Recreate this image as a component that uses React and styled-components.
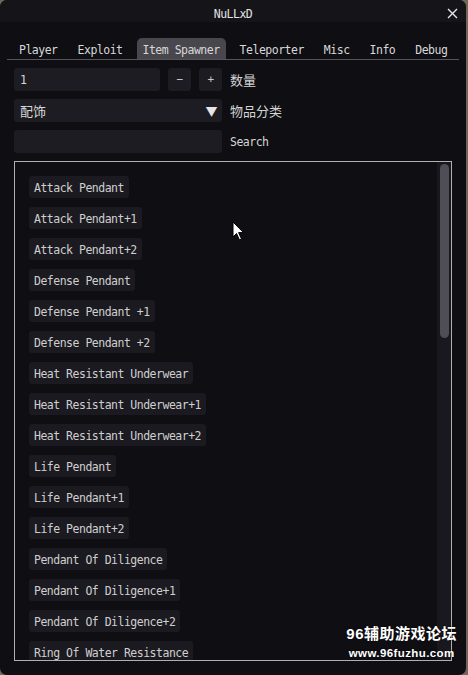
import React from 'react';
import styled, { createGlobalStyle } from 'styled-components';

const tabs = ['Player', 'Exploit', 'Item Spawner', 'Teleporter', 'Misc', 'Info', 'Debug'];

const items = [
  'Attack Pendant',
  'Attack Pendant+1',
  'Attack Pendant+2',
  'Defense Pendant',
  'Defense Pendant +1',
  'Defense Pendant +2',
  'Heat Resistant Underwear',
  'Heat Resistant Underwear+1',
  'Heat Resistant Underwear+2',
  'Life Pendant',
  'Life Pendant+1',
  'Life Pendant+2',
  'Pendant Of Diligence',
  'Pendant Of Diligence+1',
  'Pendant Of Diligence+2',
  'Ring Of Water Resistance',
];

const App = () => {
  return (
    <>
      <GlobalStyle />
      <Window>
        <TitleBar>
          <span />
          <Title>NuLLxD</Title>
          <CloseButton>
            <svg width="11" height="11" viewBox="0 0 11 11">
              <path d="M1 1L10 10M10 1L1 10" stroke="#e8e8e8" strokeWidth="1.4" />
            </svg>
          </CloseButton>
        </TitleBar>

        <TabBar>
          {tabs.map(tab => (
            <Tab key={tab} $active={tab === 'Item Spawner'}>
              {tab}
            </Tab>
          ))}
        </TabBar>

        <Form>
          <Row>
            <Field $width={146}>1</Field>
            <SmallButton>−</SmallButton>
            <SmallButton>+</SmallButton>
            <Label>
              <Cjk>数量</Cjk>
            </Label>
          </Row>
          <Row>
            <Field $width={208}>
              <Cjk>配饰</Cjk>
              <Arrow>▼</Arrow>
            </Field>
            <Label>
              <Cjk>物品分类</Cjk>
            </Label>
          </Row>
          <Row>
            <Field $width={208} />
            <Label>Search</Label>
          </Row>
        </Form>

        <ListBox>
          <ItemList>
            {items.map(item => (
              <Item key={item}>{item}</Item>
            ))}
          </ItemList>
          <ScrollTrack>
            <ScrollThumb />
          </ScrollTrack>
        </ListBox>

        <Cursor width="13" height="20" viewBox="0 0 13 20">
          <path
            d="M1 1L1 16L4.5 12.5L7.5 19L9.5 18L6.6 11.6L11.5 11.6Z"
            fill="#fff"
            stroke="#000"
            strokeWidth="1"
          />
        </Cursor>

        <Watermark>
          <WatermarkTitle>96辅助游戏论坛</WatermarkTitle>
          <WatermarkUrl>www.96fuzhu.com</WatermarkUrl>
        </Watermark>
      </Window>
    </>
  );
};

export default App;

const GlobalStyle = createGlobalStyle`
  body {
    margin: 0;
    background: #6f6758;
    font-family: "DejaVu Sans Mono", "Noto Sans CJK SC", monospace;
  }
`;

const Window = styled.div`
  position: relative;
  width: 466px;
  height: 675px;
  background: #0f0e13;
  border-radius: 7px;
  overflow: hidden;
  display: flex;
  flex-direction: column;
  color: #d4d4d4;
  font-size: 11.5px;
  letter-spacing: -0.5px;
`;

const Cjk = styled.span`
  font-family: "Noto Sans CJK SC", sans-serif;
  font-size: 13px;
  line-height: 23px;
  letter-spacing: 0;
  vertical-align: top;
`;

const TitleBar = styled.div`
  height: 22px;
  flex-shrink: 0;
  display: grid;
  grid-template-columns: 1fr auto 1fr;
  align-items: center;
  background: #151419;
`;

const Title = styled.div`
  color: #e4e4e4;
  line-height: 22px;
  padding-top: 3px;
`;

const CloseButton = styled.div`
  justify-self: end;
  display: flex;
  padding-right: 8px;
  padding-top: 1px;
`;

const TabBar = styled.div`
  display: flex;
  gap: 8px;
  margin: 16px 7px 0;
  padding-left: 6px;
  border-bottom: 1px solid #55545b;
`;

const Tab = styled.div`
  height: 21px;
  line-height: 24px;
  padding: 0 6px;
  border-radius: 5px 5px 0 0;
  color: #d8d8d8;
  background: ${({ $active }) => ($active ? '#48474e' : 'transparent')};
`;

const Form = styled.div`
  display: flex;
  flex-direction: column;
  gap: 8px;
  padding: 8px 14px 0;
`;

const Row = styled.div`
  display: flex;
  align-items: flex-start;
  gap: 8px;
  height: 23px;
`;

const Field = styled.div`
  position: relative;
  width: ${({ $width }) => $width}px;
  height: 23px;
  line-height: 24px;
  padding: 0 6px;
  box-sizing: border-box;
  background: #1d1c22;
  border-radius: 3px;
  color: #d8d8d8;
  overflow: hidden;
`;

const Arrow = styled.span`
  position: absolute;
  right: 5px;
  top: 0;
  font-family: "Noto Sans CJK SC", sans-serif;
  font-size: 12px;
  line-height: 23px;
  color: #e6e6e6;
`;

const SmallButton = styled.div`
  width: 23px;
  height: 23px;
  line-height: 24px;
  text-align: center;
  background: #1d1c22;
  border-radius: 3px;
  color: #c8c8c8;
  font-size: 11px;
`;

const Label = styled.div`
  color: #d4d4d4;
  height: 23px;
  line-height: 25px;
  overflow: hidden;
`;

const ListBox = styled.div`
  display: flex;
  width: 438px;
  height: 500px;
  box-sizing: border-box;
  margin: 8px 0 0 14px;
  border: 1px solid #b0b0b0;
`;

const ItemList = styled.div`
  flex: 1;
  display: flex;
  flex-direction: column;
  align-items: flex-start;
  gap: 9px;
  padding: 14px 0 0 14px;
  overflow: hidden;
`;

const Item = styled.div`
  flex-shrink: 0;
  height: 22px;
  line-height: 25px;
  padding: 0 5px;
  background: #1b1a20;
  border-radius: 3px;
  color: #cfcfcf;
`;

const ScrollTrack = styled.div`
  width: 14px;
  flex-shrink: 0;
  background: #19181e;
  padding: 2px 2px 0 3px;
  box-sizing: border-box;
`;

const ScrollThumb = styled.div`
  width: 9px;
  height: 174px;
  border-radius: 5px;
  background: #4f4e56;
`;

const Cursor = styled.svg`
  position: absolute;
  left: 232px;
  top: 221px;
`;

const Watermark = styled.div`
  position: absolute;
  right: 9px;
  bottom: 16px;
  display: flex;
  flex-direction: column;
  align-items: center;
  gap: 4px;
  color: #ffffff;
  font-family: "Liberation Sans", "Noto Sans CJK SC", sans-serif;
  font-weight: bold;
  letter-spacing: 0;
  text-shadow: 0 0 2px rgba(0, 0, 0, 0.6);
`;

const WatermarkTitle = styled.div`
  font-size: 15px;
  letter-spacing: 0.5px;
`;

const WatermarkUrl = styled.div`
  font-size: 11.5px;
  letter-spacing: 0.4px;
`;
